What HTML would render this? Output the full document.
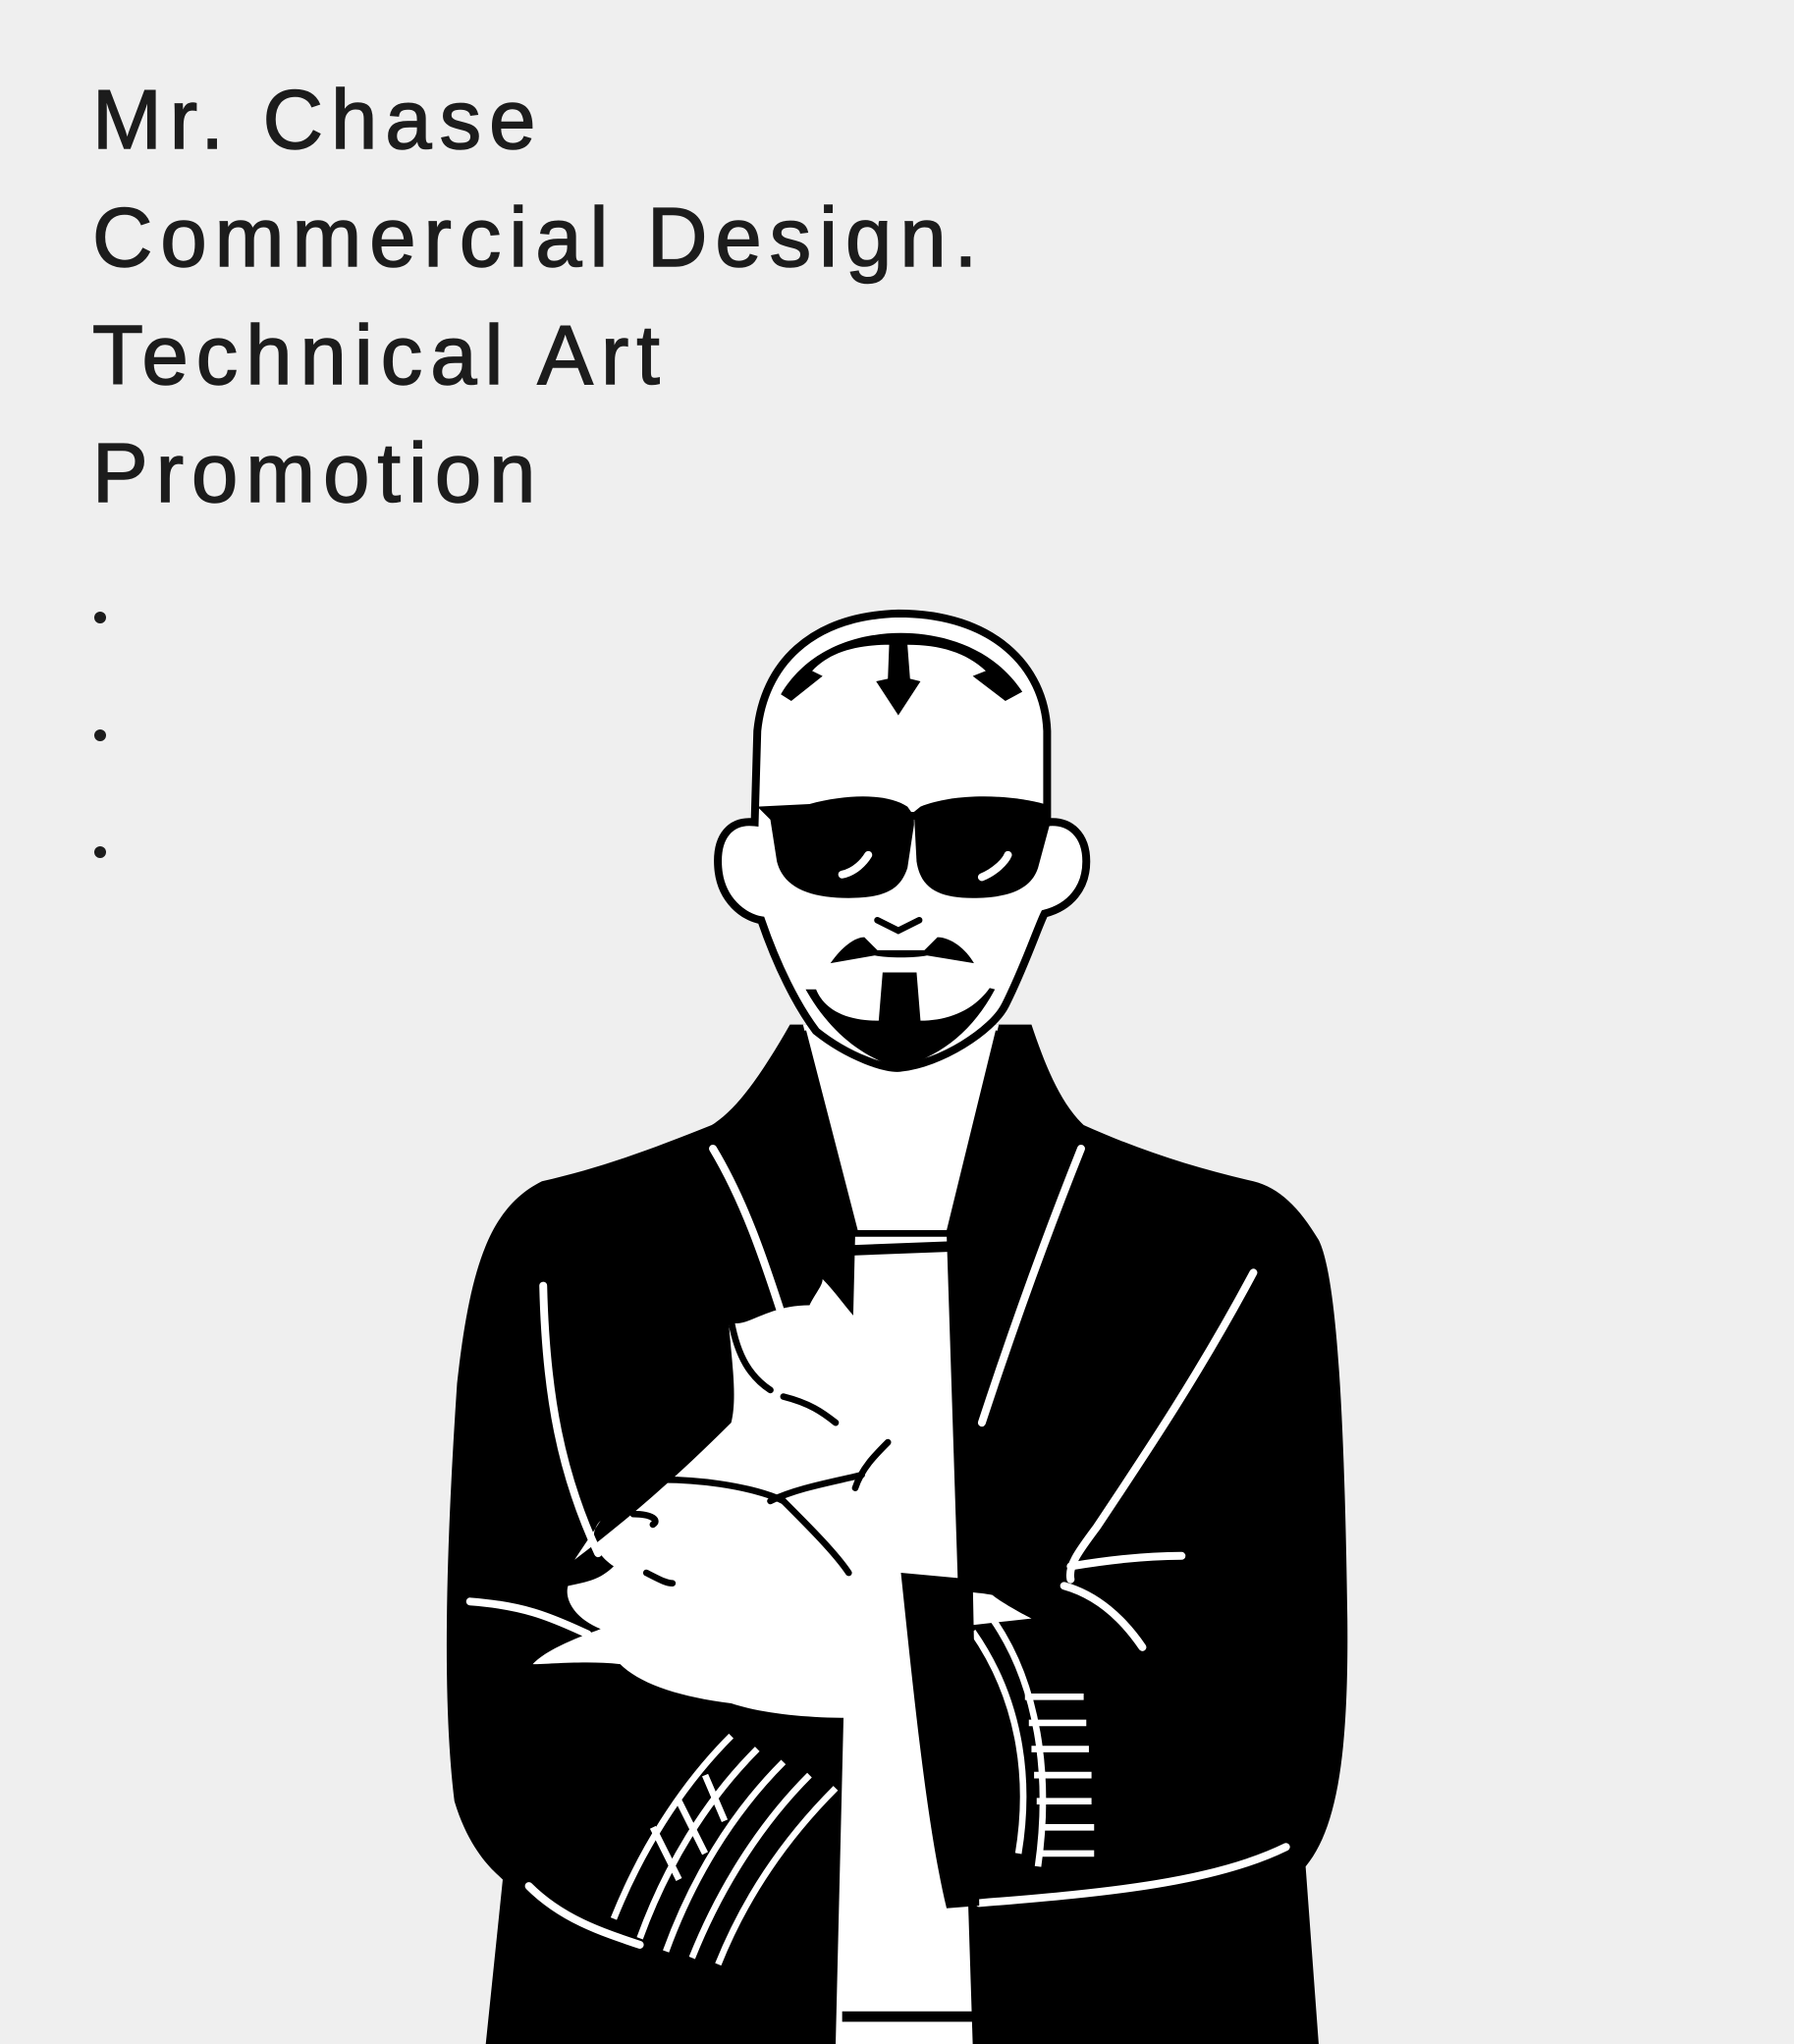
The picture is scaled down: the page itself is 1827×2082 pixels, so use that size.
<!DOCTYPE html>
<html><head><meta charset="utf-8"><style>
html,body{margin:0;padding:0;background:#efefef;}
body{width:1827px;height:2082px;position:relative;overflow:hidden;font-family:"Liberation Sans",sans-serif;color:#1c1c1c;}
.t{position:absolute;left:94px;font-size:85px;line-height:1;letter-spacing:8px;white-space:nowrap;-webkit-text-stroke:1.5px #1c1c1c;}
.d{position:absolute;left:96px;width:12px;height:12px;border-radius:50%;background:#1c1c1c;}
svg{position:absolute;left:0;top:0;}
</style></head><body>
<div class="t" style="top:80px">Mr. Chase</div>
<div class="t" style="top:200px">Commercial Design.</div>
<div class="t" style="top:320px">Technical Art</div>
<div class="t" style="top:440px">Promotion</div>
<div class="d" style="top:623px"></div>
<div class="d" style="top:743px"></div>
<div class="d" style="top:862px"></div>
<svg width="1827" height="2082" viewBox="0 0 1374 1566">
<path d="M605,785 C585,820 565,850 545,862 C500,880 460,895 415,905 C375,925 360,970 350,1060 C342,1180 338,1300 348,1380 C360,1420 380,1435 385,1440 L372,1566 L1010,1566 L1000,1430 C1025,1400 1033,1340 1032,1240 C1030,1100 1025,980 1010,950 C995,925 980,910 960,905 C915,895 870,880 830,862 C812,845 800,815 790,785 Z" fill="#000"/>
<path d="M615,785 L765,785 L725,945 L655,945 Z" fill="#fff"/>
<path d="M655,945 L725,945 L745,1566 L640,1566 Z" fill="#fff"/>
<path d="M650,958 L728,955 M645,1545 L748,1545" stroke="#000" stroke-width="8" fill="none"/>
<path d="M615,790 L655,945 L727,945 L765,790" stroke="#000" stroke-width="5" fill="none"/>
<g stroke="#fff" stroke-width="6" fill="none" stroke-linecap="round">
<path d="M546,880 C570,920 585,965 598,1005"/>
<path d="M828,880 C800,950 775,1020 752,1090"/>
<path d="M416,985 C418,1070 430,1130 458,1190"/>
<path d="M960,975 C920,1050 880,1110 840,1170 C825,1190 818,1200 820,1210"/>
<path d="M820,1200 C850,1195 880,1192 905,1192"/>
<path d="M360,1227 C400,1230 420,1238 450,1252"/>
<path d="M405,1445 C430,1470 460,1480 490,1490"/>
<path d="M750,1458 C850,1450 930,1442 985,1415"/>
<path d="M815,1215 C840,1222 860,1240 875,1262"/>
</g>
<g stroke="#fff" stroke-width="5" fill="none">
<path d="M470,1470 C490,1420 520,1370 560,1330"/><path d="M490,1485 C510,1430 540,1380 580,1340"/><path d="M510,1495 C530,1440 560,1390 600,1350"/><path d="M530,1500 C550,1450 580,1400 620,1360"/><path d="M550,1505 C570,1455 600,1410 640,1370"/><path d="M500,1400 L520,1440 M520,1380 L540,1420 M540,1360 L555,1395"/>
<path d="M745,1250 C780,1300 790,1360 780,1420"/><path d="M760,1240 C795,1290 805,1360 795,1430"/><path d="M785,1300 L830,1300 M788,1320 L832,1320 M790,1340 L834,1340 M792,1360 L836,1360 M794,1380 L836,1380 M796,1400 L838,1400 M798,1420 L838,1420"/>
</g>
<path d="M440,1195 C480,1165 520,1130 560,1090 C565,1070 560,1040 558,1012 C570,1020 585,1000 620,1000 C625,990 630,985 630,980 C640,990 650,1005 660,1015 C690,1030 695,1080 680,1105 C700,1120 715,1125 720,1130 L715,1165 C700,1200 705,1230 690,1205 C700,1220 740,1218 760,1222 C770,1230 790,1240 790,1240 L745,1245 C740,1290 720,1310 680,1315 C640,1318 590,1315 560,1305 C520,1300 490,1290 475,1275 C450,1272 420,1275 408,1275 C420,1262 450,1252 460,1248 C440,1240 432,1225 435,1215 C450,1212 460,1210 470,1200 C455,1190 450,1175 460,1165 Z" fill="#fff"/>
<path d="M690,1205 L745,1210 L750,1460 L725,1462 C710,1400 700,1300 690,1205 Z" fill="#000"/>
<g stroke="#000" stroke-width="5" fill="none" stroke-linecap="round">
<path d="M560,1012 C565,1040 575,1055 590,1065"/><path d="M600,1070 C620,1075 630,1082 640,1090"/><path d="M480,1135 C530,1130 580,1140 600,1150"/><path d="M600,1150 C620,1170 640,1190 650,1205"/><path d="M590,1150 C610,1140 640,1135 660,1130"/><path d="M680,1105 C670,1115 660,1125 655,1140"/><path d="M485,1160 C500,1160 505,1165 500,1168"/><path d="M495,1205 C505,1210 510,1213 515,1213"/>
</g>
<path d="M688,470 C620,472 585,510 580,560 L578,630 C560,628 548,640 550,665 C552,690 570,703 583,705 C595,740 610,770 625,790 C650,810 680,820 690,818 C720,815 760,790 770,770 C785,740 795,710 800,700 C820,695 832,680 832,660 C832,640 820,628 802,630 L802,560 C800,510 760,470 688,470 Z" fill="#fff" stroke="#000" stroke-width="6"/>
<path d="M598,532 C620,495 660,485 690,485 C720,485 760,495 783,530 L770,537 L745,518 L755,514 C740,500 720,494 695,494 L697,520 L705,522 L688,548 L671,522 L680,520 L681,494 C655,494 635,500 622,514 L630,518 L606,537 Z" fill="#000"/>
<path d="M580,618 L620,616 C650,608 680,608 695,618 L700,625 L700,632 L695,665 C690,680 680,688 650,688 C620,688 600,680 595,660 L590,628 Z" fill="#000"/>
<path d="M700,622 L705,618 C730,608 770,608 800,616 L805,628 L795,665 C790,680 775,688 745,688 C718,688 705,680 702,660 Z" fill="#000"/>
<path d="M680,625 L720,625" stroke="#000" stroke-width="6"/>
<path d="M645,670 C655,668 662,660 665,655 M752,672 C762,668 770,660 772,655" stroke="#fff" stroke-width="6" stroke-linecap="round"/>
<path d="M672,705 L688,713 L704,705" stroke="#000" stroke-width="5" fill="none" stroke-linecap="round"/>
<path d="M636,738 C645,725 655,718 662,718 L672,728 L708,728 L718,718 C728,718 740,727 746,738 L710,732 C700,734 680,734 670,732 Z" fill="#000"/>
<path d="M617,758 C635,790 660,810 688,818 C720,810 745,790 762,758 L758,757 C745,775 725,782 705,782 L702,745 L676,745 L673,782 C650,782 632,775 625,758 Z" fill="#000"/>
</svg>
</body></html>
